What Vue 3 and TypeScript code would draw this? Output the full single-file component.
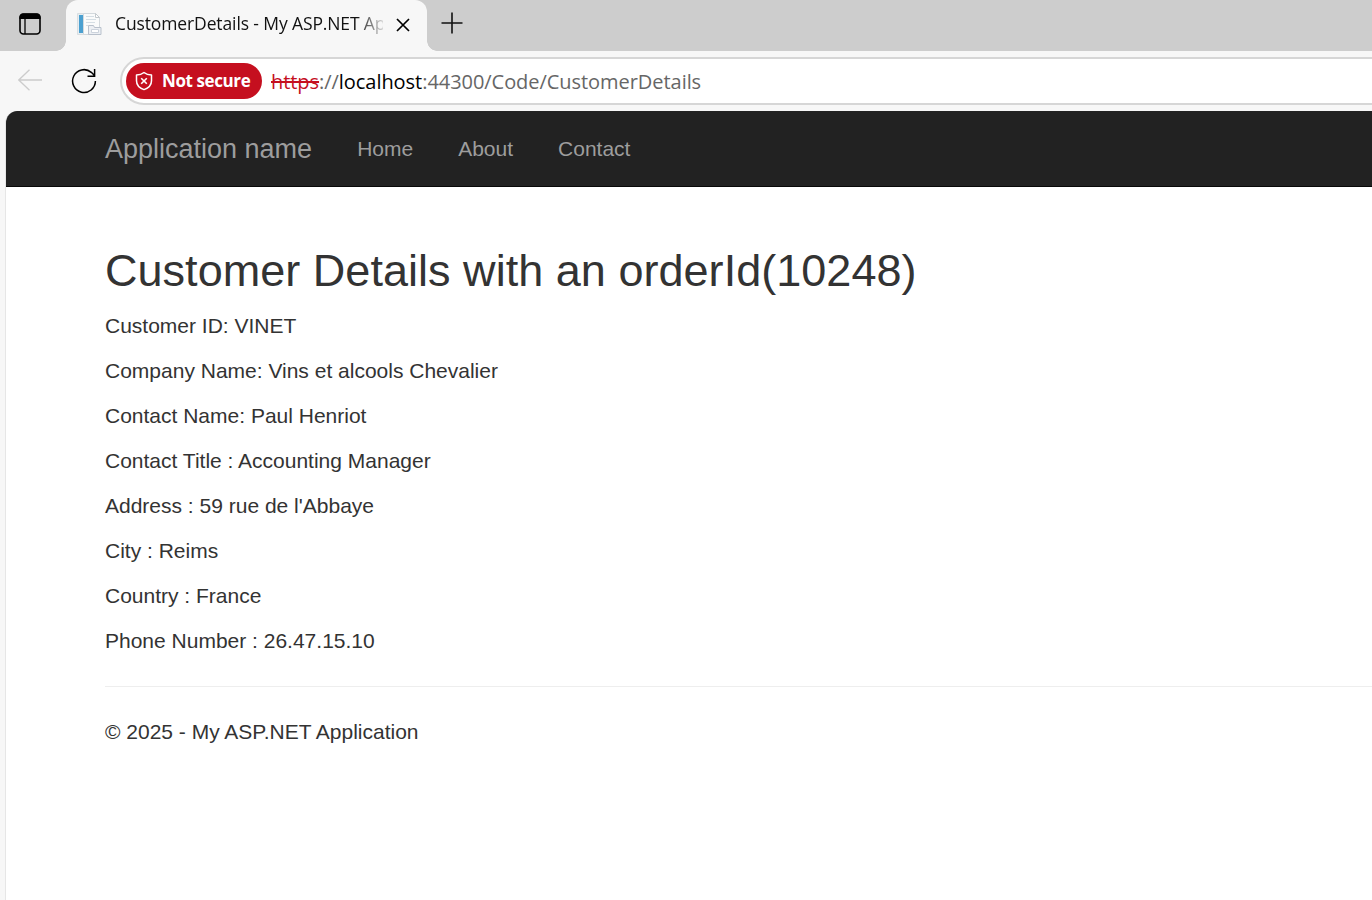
<script setup lang="ts">
interface Detail {
  label: string
  value: string
}

const navLinks: string[] = ['Home', 'About', 'Contact']

const details: Detail[] = [
  { label: 'Customer ID:', value: 'VINET' },
  { label: 'Company Name:', value: 'Vins et alcools Chevalier' },
  { label: 'Contact Name:', value: 'Paul Henriot' },
  { label: 'Contact Title :', value: 'Accounting Manager' },
  { label: 'Address :', value: "59 rue de l'Abbaye" },
  { label: 'City :', value: 'Reims' },
  { label: 'Country :', value: 'France' },
  { label: 'Phone Number :', value: '26.47.15.10' },
]
</script>

<template>
  <div class="browser">
    <div class="tabstrip">
      <svg class="tab-actions" width="22" height="22" viewBox="0 0 22 22">
        <rect x="1" y="1" width="20" height="20" rx="3.5" fill="none" stroke="#000" stroke-width="1.6" />
        <path d="M.5 6V4A3.500 3.500 0 0 1 4 .5h14A3.500 3.500 0 0 1 21.500 4v2z" fill="#000" />
        <path d="M6 6v15" stroke="#000" stroke-width="1.300" />
      </svg>
      <div class="tab">
        <svg class="favicon" width="25" height="24" viewBox="0 0 25 24">
          <path d="M.5 1.500h6v21h-6z" fill="#e6edf1" stroke="#d9dee1" />
          <path d="M2 3h4v18H2z" fill="#4ba0d0" />
          <path d="M6.500 1.500h12l4 4v17h-16z" fill="#fafbfb" stroke="#d3d9dd" />
          <path d="M9 4.500h8M9 7.500h10M9 10.500h9M9 13.500h2" stroke="#d5dee4" />
          <path d="M18.500 1.500v4h4z" fill="#fff" stroke="#c4cace" />
          <path d="M11.500 22.500v-9h5l1 2h6.500v7z" fill="#eceff3" stroke="#b9c1cc" />
          <path d="M14.500 17.500h7v3h-7z" fill="#fff" stroke="#ccd3dc" />
        </svg>
        <span class="tab-title">CustomerDetails - My ASP.NET Application</span>
        <svg class="close" width="14" height="14" viewBox="0 0 14 14">
          <path d="M1 1l12 12M13 1L1 13" stroke="#000" stroke-width="1.700" />
        </svg>
      </div>
      <svg class="new-tab" width="22" height="22" viewBox="0 0 22 22">
        <path d="M11 .5v21M.5 11h21" stroke="#111" stroke-width="1.600" />
      </svg>
    </div>
    <div class="toolbar">
      <svg class="back" width="25" height="22" viewBox="0 0 25 22">
        <path d="M24 11H.8M11.500 .8L.8 11l10.700 10.200" fill="none" stroke="#ccc" stroke-width="1.300" />
      </svg>
      <svg class="reload" width="26" height="26" viewBox="0 0 26 26">
        <path d="M24.400 13A11.400 11.400 0 1 1 20.300 4.300L23.500 7.500M23.600 1v7.200H16.500" fill="none" stroke="#000" stroke-width="1.500" />
      </svg>
      <div class="address">
        <div class="badge">
          <svg width="18" height="20" viewBox="0 0 18 20">
            <path d="M9 1.500C11 3.100 13.500 3.900 16.500 4V9.700C16.500 14 13.500 17 9 18.600C4.500 17 1.500 14 1.500 9.700V4C4.500 3.900 7 3.100 9 1.500Z" fill="none" stroke="#fff" stroke-width="1.500" stroke-linejoin="round" />
            <path d="M6.200 7.200l5.600 5.600M11.800 7.200l-5.600 5.600" stroke="#fff" stroke-width="1.600" />
          </svg>
          <span class="badge-text">Not secure</span>
        </div>
        <div class="url"><span class="scheme">https</span><span class="sep">://</span><span class="host">localhost</span><span class="path">:44300/Code/CustomerDetails</span></div>
      </div>
    </div>
    <div class="page">
      <nav class="navbar">
        <span class="brand">Application name</span>
        <span v-for="link in navLinks" :key="link" class="nav-link">{{ link }}</span>
      </nav>
      <main class="content">
        <h2>Customer Details with an orderId(10248)</h2>
        <p v-for="d in details" :key="d.label">{{ d.label }} {{ d.value }}</p>
        <hr />
        <footer><p>© 2025 - My ASP.NET Application</p></footer>
      </main>
    </div>
  </div>
</template>

<style>
body {
  margin: 0;
  overflow: hidden;
}
</style>

<style scoped>
.browser {
  display: flex;
  flex-direction: column;
  width: 100%;
  height: 900px;
  overflow: hidden;
  background: #f7f7f7;
  font-family: "Open Sans", "Noto Sans", sans-serif;
}
svg {
  display: block;
  flex: none;
}
.tabstrip {
  display: flex;
  flex: none;
  height: 51px;
  background: #cdcdcd;
}
.tab-actions {
  margin: 13px 0 0 19px;
}
.tab {
  position: relative;
  display: flex;
  box-sizing: border-box;
  width: 361px;
  height: 51px;
  margin-left: 25px;
  padding-left: 11px;
  border-radius: 12px 12px 0 0;
  background: #f7f7f7;
}
.tab::before,
.tab::after {
  content: "";
  position: absolute;
  bottom: 0;
  width: 10px;
  height: 10px;
}
.tab::before {
  left: -10px;
  background: radial-gradient(circle at 0 0, #cdcdcd 9.500px, #f7f7f7 10px);
}
.tab::after {
  right: -10px;
  background: radial-gradient(circle at 100% 0, #cdcdcd 9.500px, #f7f7f7 10px);
}
.favicon {
  margin-top: 12px;
}
.tab-title {
  width: 268px;
  height: 30px;
  margin: 8px 0 0 13px;
  overflow: hidden;
  white-space: nowrap;
  font-size: 17.500px;
  line-height: 30px;
  letter-spacing: -0.120px;
  color: #111;
  -webkit-mask-image: linear-gradient(to right, #000 242px, transparent 272px);
  mask-image: linear-gradient(to right, #000 242px, transparent 272px);
}
.close {
  margin: 18px 0 0 13px;
}
.new-tab {
  margin: 12px 0 0 14px;
}
.toolbar {
  display: flex;
  flex: none;
  height: 60px;
}
.back {
  margin: 18px 0 0 18px;
}
.reload {
  margin: 17px 0 0 28px;
}
.address {
  display: flex;
  flex: 1;
  box-sizing: border-box;
  height: 48px;
  margin: 6px -40px 0 23px;
  padding: 4px 0 0 4px;
  border: 2px solid #d6d6d6;
  border-radius: 24px;
  background: #fff;
}
.badge {
  display: flex;
  align-items: center;
  box-sizing: border-box;
  width: 136px;
  height: 36px;
  padding-left: 9px;
  border-radius: 18px;
  background: #c50f1f;
  color: #fff;
}
.badge-text {
  margin-left: 9px;
  white-space: nowrap;
  font-size: 17px;
  font-weight: 700;
  line-height: 36px;
  letter-spacing: -0.400px;
}
.url {
  margin-left: 9px;
  white-space: nowrap;
  font-size: 20px;
  line-height: 38px;
  letter-spacing: -0.050px;
  color: #666;
}
.scheme {
  color: #c50f1f;
  text-decoration: line-through;
  text-decoration-thickness: 2px;
}
.host {
  color: #000;
}
.page {
  flex: 1;
  margin-left: 5px;
  border-left: 1px solid #e6e6e6;
  border-radius: 12px 0 0 0;
  background: #fff;
  overflow: hidden;
  font-family: "Liberation Sans", Arial, sans-serif;
  font-size: 21px;
  line-height: 30px;
  color: #333;
}
.navbar {
  display: flex;
  box-sizing: border-box;
  height: 76px;
  padding: 23px 0 0 99px;
  border-bottom: 1px solid #080808;
  background: #222;
  color: #9d9d9d;
}
.brand {
  margin-right: 22.500px;
  font-size: 27px;
}
.nav-link {
  padding: 0 22.500px;
}
.content {
  padding: 58px 0 0 99px;
}
h2 {
  margin: 0 0 14px;
  font-size: 45px;
  font-weight: 500;
  line-height: 52px;
  letter-spacing: 0.030px;
}
p {
  margin: 0 0 15px;
}
hr {
  height: 0;
  margin: 30px 0;
  border: 0;
  border-top: 1px solid #eee;
}
</style>
